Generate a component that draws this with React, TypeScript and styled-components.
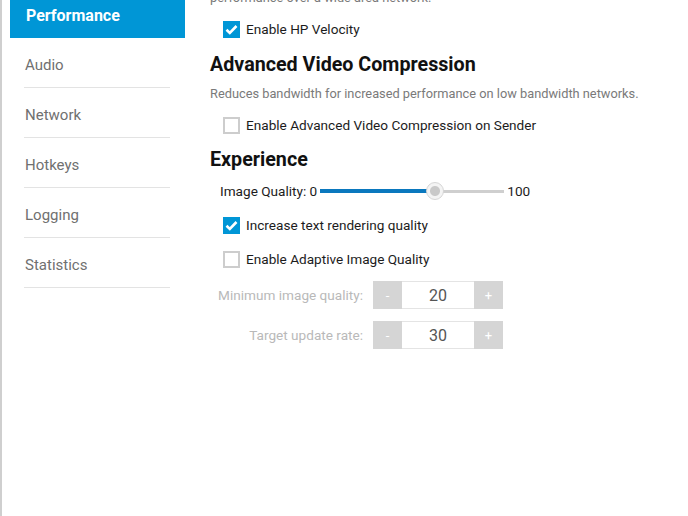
import React from "react";
import styled, { createGlobalStyle } from "styled-components";

const Global = createGlobalStyle`
  html, body { margin: 0; padding: 0; background: #fff; overflow: hidden; }
  body { font-family: Roboto, "Liberation Sans", Arial, sans-serif; }
`;

const Shell = styled.div`
  display: flex;
  height: 516px;
  width: 688px;
  border-left: 2px solid #cfcfcf;
  box-sizing: border-box;
  overflow: hidden;
`;

const Nav = styled.nav`
  width: 175px;
  margin-left: 8px;
  display: flex;
  flex-direction: column;
  flex-shrink: 0;
`;

const NavItem = styled.div<{ $active?: boolean }>`
  display: flex;
  align-items: center;
  box-sizing: border-box;
  font-size: 15px;
  ${(p) =>
    p.$active
      ? `
    height: 38px;
    background: #0096d6;
    color: #fff;
    font-weight: 700;
    font-size: 16px;
    padding-left: 16px;
    padding-bottom: 7px;
  `
      : `
    height: 50px;
    margin: 0 15px 0 14px;
    border-bottom: 1px solid #e3e3e3;
    color: #707070;
    padding-left: 1px;
    padding-top: 5px;
  `}
`;

const Main = styled.main`
  margin-left: 25px;
  display: flex;
  flex-direction: column;
  color: #1c1c1c;
  font-size: 13.6px;
`;

const Desc = styled.div<{ $mt: number }>`
  height: 18px;
  line-height: 18px;
  margin-top: ${(p) => p.$mt}px;
  font-size: 12.8px;
  color: #7a7a7a;
  white-space: nowrap;
`;

const Heading = styled.h2<{ $mt: number }>`
  height: 26px;
  line-height: 26px;
  margin: ${(p) => p.$mt}px 0 0 0;
  font-size: 19.7px;
  font-weight: 700;
  color: #111;
  white-space: nowrap;
`;

const CheckRow = styled.label<{ $mt: number }>`
  display: flex;
  align-items: center;
  gap: 6px;
  height: 24px;
  margin-top: ${(p) => p.$mt}px;
  margin-left: 13px;
  white-space: nowrap;
`;

const Box = styled.span<{ $on?: boolean }>`
  width: 17px;
  height: 17px;
  box-sizing: border-box;
  display: flex;
  align-items: center;
  justify-content: center;
  background: ${(p) => (p.$on ? "#0096d6" : "#fff")};
  border: ${(p) => (p.$on ? "none" : "2px solid #cdcdcd")};
`;

const SliderRow = styled.div<{ $mt: number }>`
  display: flex;
  align-items: center;
  height: 24px;
  margin-top: ${(p) => p.$mt}px;
  margin-left: 10px;
  white-space: nowrap;
`;

const Track = styled.div`
  position: relative;
  width: 184px;
  height: 3px;
  margin: 0 3px 0 3px;
  background: #cfcfcf;
`;

const Fill = styled.div`
  position: absolute;
  left: 0;
  top: -0.5px;
  height: 4px;
  background: #0a78be;
`;

const Thumb = styled.div`
  position: absolute;
  top: 50%;
  width: 18px;
  height: 18px;
  margin-left: -9px;
  margin-top: -9px;
  border-radius: 50%;
  box-sizing: border-box;
  background: radial-gradient(circle, #c9c9c9 0 4.5px, #f4f4f4 5.5px);
  border: 1px solid #d6d6d6;
`;

const SpinRow = styled.div<{ $mt: number }>`
  display: flex;
  align-items: center;
  height: 28px;
  margin-top: ${(p) => p.$mt}px;
`;

const SpinLabel = styled.span`
  width: 153px;
  text-align: right;
  margin-right: 10px;
  color: #b9b9b9;
  white-space: nowrap;
`;

const SpinBtn = styled.span<{ $w: number }>`
  width: ${(p) => p.$w}px;
  height: 28px;
  background: #d5d5d5;
  color: #fff;
  display: flex;
  align-items: center;
  justify-content: center;
  font-size: 13px;
`;

const SpinValue = styled.span`
  width: 72px;
  height: 28px;
  box-sizing: border-box;
  border-top: 1px solid #e4e4e4;
  border-bottom: 1px solid #e4e4e4;
  display: flex;
  align-items: center;
  justify-content: center;
  font-size: 16px;
  color: #555;
`;

const Check = () => (
  <svg width="13" height="11" viewBox="0 0 13 11">
    <path d="M1.5 5.8 L4.8 9 L11.5 2" fill="none" stroke="#fff" strokeWidth="2.6" />
  </svg>
);

const Checkbox = ({ on, label, mt }: { on?: boolean; label: string; mt: number }) => (
  <CheckRow $mt={mt}>
    <Box $on={on}>{on && <Check />}</Box>
    <span>{label}</span>
  </CheckRow>
);

const Spinner = ({ label, value, mt }: { label: string; value: number; mt: number }) => (
  <SpinRow $mt={mt}>
    <SpinLabel>{label}</SpinLabel>
    <SpinBtn $w={29}>-</SpinBtn>
    <SpinValue>{value}</SpinValue>
    <SpinBtn $w={29}>+</SpinBtn>
  </SpinRow>
);

export default function App() {
  const pct = 115 / 184;
  return (
    <>
      <Global />
      <Shell>
        <Nav>
          <NavItem $active>Performance</NavItem>
          <NavItem>Audio</NavItem>
          <NavItem>Network</NavItem>
          <NavItem>Hotkeys</NavItem>
          <NavItem>Logging</NavItem>
          <NavItem>Statistics</NavItem>
        </Nav>
        <Main>
          <Desc $mt={-11}>performance over a wide area network.</Desc>
          <Checkbox on label="Enable HP Velocity" mt={10} />
          <Heading $mt={11}>Advanced Video Compression</Heading>
          <Desc $mt={7}>Reduces bandwidth for increased performance on low bandwidth networks.</Desc>
          <Checkbox label="Enable Advanced Video Compression on Sender" mt={10} />
          <Heading $mt={10}>Experience</Heading>
          <SliderRow $mt={6}>
            <span>Image Quality: 0</span>
            <Track>
              <Fill style={{ width: `${pct * 100}%` }} />
              <Thumb style={{ left: `${pct * 100}%` }} />
            </Track>
            <span>100</span>
          </SliderRow>
          <Checkbox on label="Increase text rendering quality" mt={10} />
          <Checkbox label="Enable Adaptive Image Quality" mt={10} />
          <Spinner label="Minimum image quality:" value={20} mt={10} />
          <Spinner label="Target update rate:" value={30} mt={12} />
        </Main>
      </Shell>
    </>
  );
}
